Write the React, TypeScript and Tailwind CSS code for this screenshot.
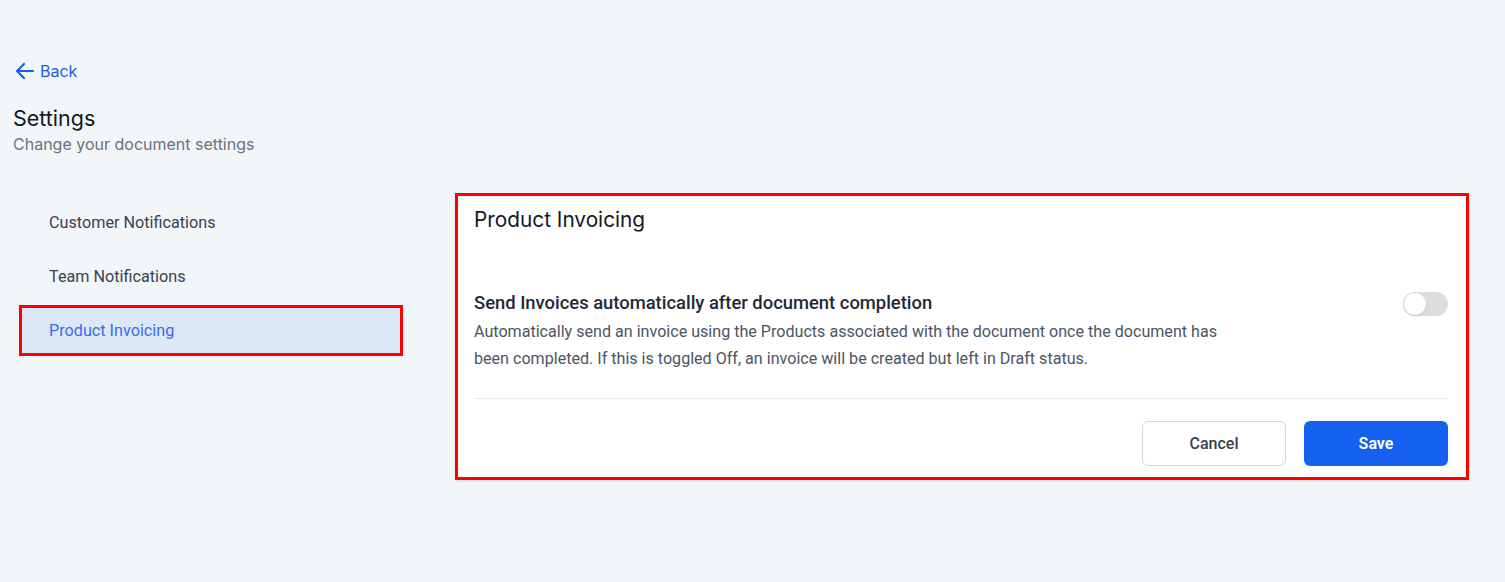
import { useState } from "react";

const navItems = ["Customer Notifications", "Team Notifications", "Product Invoicing"];

export default function App() {
  const [active, setActive] = useState("Product Invoicing");
  const [autoSend, setAutoSend] = useState(false);

  return (
    <div className="min-h-[582px] w-full bg-[#f2f6f9] pl-[13px] pt-[59px] font-['Roboto',sans-serif]">
      <a href="#" className="flex h-6 items-center gap-[3px] text-[16px] text-[#1a5cf0] font-['Inter',sans-serif]">
        <svg width="24" height="24" viewBox="0 0 24 24" fill="none" stroke="currentColor" strokeWidth="2.2" strokeLinecap="round" strokeLinejoin="round">
          <path d="M20 12H5" />
          <path d="M11 5l-7 7 7 7" />
        </svg>
        Back
      </a>

      <h1 className="mt-[21px] text-[21.5px] leading-[28px] text-[#111827] font-['Inter',sans-serif]">Settings</h1>
      <p className="text-[16px] leading-6 text-[#6b7280] font-['Inter',sans-serif]">Change your document settings</p>

      <div className="ml-[6px] mt-[37px] flex items-start gap-[52px]">
        <nav className="mt-[5px] flex w-[384px] flex-col gap-[3px]">
          {navItems.map((item) => {
            const isActive = item === active;
            return (
              <button
                key={item}
                onClick={() => setActive(item)}
                className={
                  isActive
                    ? "-mt-px h-[51px] border-[3px] border-[#ff0000] bg-[#dce8f8] pl-[27px] pt-px text-left text-[16.2px] text-[#3b6af0]"
                    : "h-[51px] border-[3px] border-transparent pl-[27px] text-left text-[16.2px] text-[#374151]"
                }
              >
                {item}
              </button>
            );
          })}
        </nav>

        <section className="w-[1014px] border-[3px] border-[#ff0000] bg-white shadow-sm">
          <div className="pl-4 pr-[18px] pt-[10px] pb-[11px]">
            <h2 className="text-[20.8px] leading-[28px] text-[#111827] font-['Inter',sans-serif]">Product Invoicing</h2>

            <div className="mt-[57px] flex items-start justify-between">
              <div>
                <h3 className="text-[18.4px] font-medium leading-6 text-[#1f2937]">
                  Send Invoices automatically after document completion
                </h3>
                <p className="mt-[3px] w-[760px] text-[16.1px] leading-[27px] text-[#4b5563]">
                  Automatically send an invoice using the Products associated with the document once the document has been completed. If this is toggled Off, an invoice will be created but left in Draft status.
                </p>
              </div>
              <button
                onClick={() => setAutoSend(!autoSend)}
                className={
                  autoSend
                    ? "relative mt-[1px] h-6 w-[45px] rounded-full bg-[#1660f0]"
                    : "relative mt-[1px] h-6 w-[45px] rounded-full bg-[#dddddd]"
                }
              >
                <span
                  className={
                    autoSend
                      ? "absolute left-[22px] top-px h-[22px] w-[22px] rounded-full bg-white shadow"
                      : "absolute left-px top-px h-[22px] w-[22px] rounded-full bg-white shadow"
                  }
                />
              </button>
            </div>

            <div className="mt-[26px] h-px bg-[#eaeaea]" />

            <div className="mt-[22px] flex justify-end gap-[18px]">
              <button className="h-[45px] w-[144px] rounded-md border border-[#d4d7de] bg-white text-[16px] font-medium text-[#374151]">
                Cancel
              </button>
              <button className="h-[45px] w-[144px] rounded-md bg-[#1660f0] text-[16px] font-semibold text-white">
                Save
              </button>
            </div>
          </div>
        </section>
      </div>
    </div>
  );
}
